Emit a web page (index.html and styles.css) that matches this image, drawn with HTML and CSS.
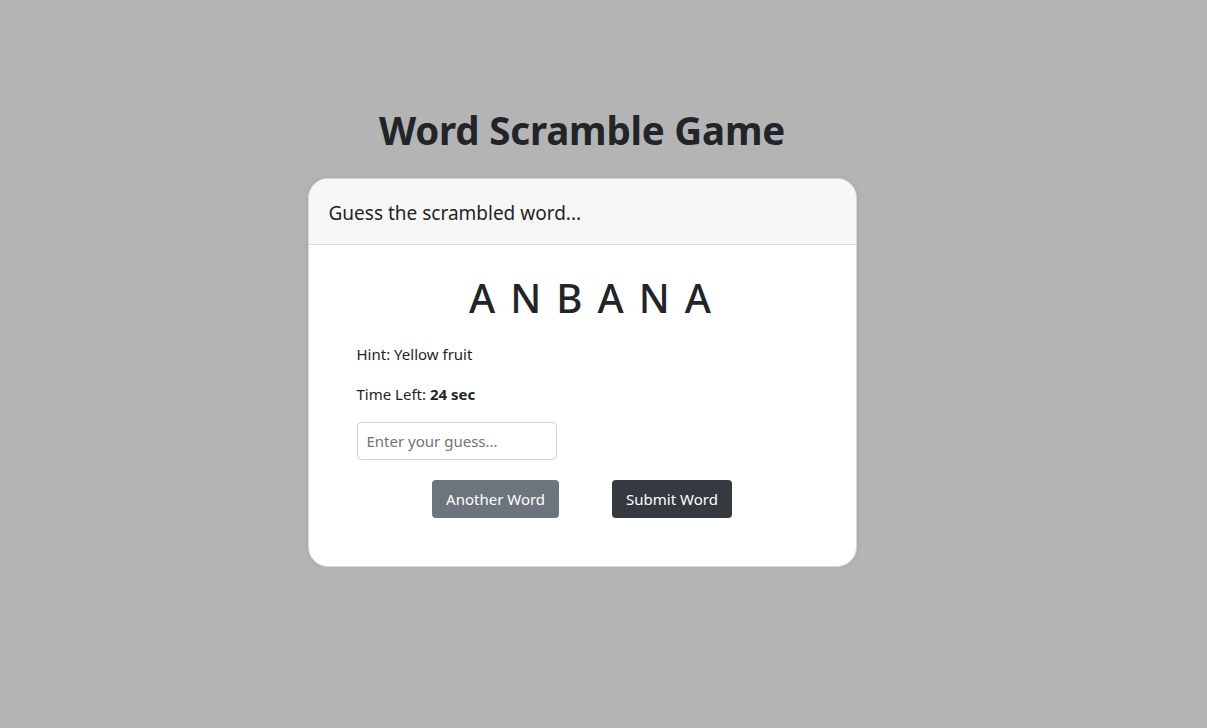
FILE: index.html
```html
<!DOCTYPE html>
<html>
<head>
<meta charset="utf-8">
<link rel="stylesheet" href="styles.css">
</head>
<body>
<main class="page">
  <h1 class="title">Word Scramble Game</h1>
  <section class="card">
    <div class="card-header">Guess the scrambled word...</div>
    <div class="card-body">
      <p class="word">ANBANA</p>
      <p class="line">Hint: <span>Yellow fruit</span></p>
      <p class="line">Time Left: <b>24 sec</b></p>
      <input class="guess" type="text" placeholder="Enter your guess...">
      <div class="actions">
        <button class="btn btn-grey">Another Word</button>
        <button class="btn btn-dark">Submit Word</button>
      </div>
    </div>
  </section>
</main>
</body>
</html>
```

FILE: styles.css
```css
html, body {
  margin: 0;
  padding: 0;
  background: #b4b4b4;
  font-family: "Noto Sans", "Open Sans", sans-serif;
  color: #212529;
}
.page {
  display: flex;
  flex-direction: column;
  align-items: center;
  padding: 102px 43px 0 0;
}
.title {
  margin: 0 0 20px;
  font-size: 38.5px;
  font-weight: 700;
  line-height: 56px;
  letter-spacing: -0.2px;
  color: #212529;
}
.card {
  width: 549px;
  box-sizing: border-box;
  background: #fff;
  border: 1px solid #d8d8d8;
  border-radius: 20px;
  box-shadow: 0 0 6px rgba(0,0,0,0.08);
  overflow: hidden;
}
.card-header {
  background: #f7f7f7;
  border-bottom: 1px solid #dadada;
  height: 66px;
  box-sizing: border-box;
  padding: 2px 20px 0;
  display: flex;
  align-items: center;
  font-size: 19px;
}
.card-body {
  padding: 26px 48px 48px;
  display: flex;
  flex-direction: column;
}
.word {
  margin: 0 0 17px 31px;
  text-align: center;
  font-size: 40px;
  line-height: 54px;
  letter-spacing: 15px;
  font-weight: 500;
}
.line {
  margin: 0 0 16px;
  font-size: 15px;
  line-height: 24px;
}
.line b {
  font-weight: 700;
}
.guess {
  width: 200px;
  height: 38px;
  box-sizing: border-box;
  border: 1px solid #ced4da;
  border-radius: 4px;
  padding: 0 9px;
  font-family: inherit;
  font-size: 15px;
  color: #212529;
  margin-top: 0;
}
.guess::placeholder {
  color: #6c757d;
}
.actions {
  display: flex;
  justify-content: center;
  gap: 53px;
  margin-top: 20px;
}
.btn {
  height: 38px;
  border: none;
  border-radius: 4px;
  padding: 0 14px;
  font-family: inherit;
  font-size: 15px;
  color: #fff;
}
.btn-grey {
  background: #6c757d;
}
.btn-dark {
  background: #343a40;
}
```
